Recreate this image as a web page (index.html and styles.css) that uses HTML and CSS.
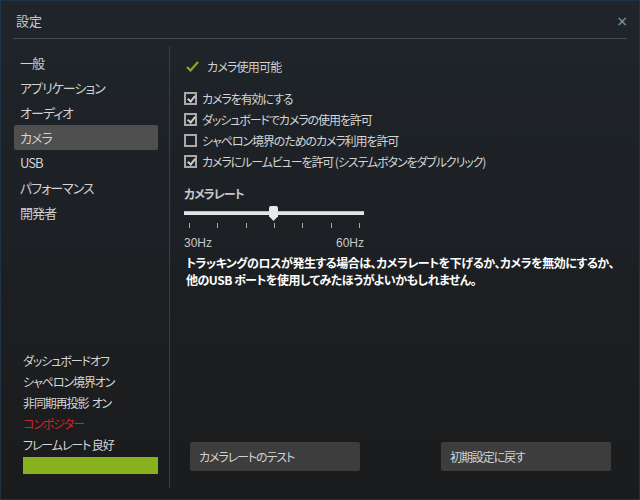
FILE: index.html
```html
<!DOCTYPE html>
<html lang="ja">
<head>
<meta charset="utf-8">
<link rel="stylesheet" href="styles.css">
</head>
<body>
<div class="window">
  <header class="titlebar">
    <span class="title">設定</span>
    <span class="close">×</span>
  </header>
  <div class="rule"></div>
  <div class="main">
    <aside class="sidebar">
      <nav class="nav">
        <div class="nav-item">一般</div>
        <div class="nav-item">アプリケーション</div>
        <div class="nav-item">オーディオ</div>
        <div class="nav-item active">カメラ</div>
        <div class="nav-item">USB</div>
        <div class="nav-item">パフォーマンス</div>
        <div class="nav-item">開発者</div>
      </nav>
      <div class="status">
        <div class="status-item">ダッシュボードオフ</div>
        <div class="status-item">シャペロン境界オン</div>
        <div class="status-item">非同期再投影&nbsp;&nbsp;オン</div>
        <div class="status-item red">コンポジター</div>
        <div class="status-item">フレームレート 良好</div>
        <div class="status-bar"></div>
      </div>
    </aside>
    <section class="content">
      <div class="ready">
        <svg class="tick" width="13" height="11" viewBox="0 0 13 11"><path d="M1 6 L4.5 9.5 L12 1" fill="none" stroke="#7fb01e" stroke-width="2.2"/></svg>
        <span>カメラ使用可能</span>
      </div>
      <div class="checks">
        <label class="check"><span class="box on"></span>カメラを有効にする</label>
        <label class="check"><span class="box on"></span>ダッシュボードでカメラの使用を許可</label>
        <label class="check"><span class="box"></span>シャペロン境界のためのカメラ利用を許可</label>
        <label class="check"><span class="box on"></span>カメラにルームビューを許可 (システムボタンをダブルクリック)</label>
      </div>
      <div class="rate-title">カメラレート</div>
      <div class="slider">
        <div class="track"></div>
        <div class="thumb"></div>
      </div>
      <div class="ticks">
        <span></span><span></span><span></span><span></span><span></span><span></span><span></span>
      </div>
      <div class="hz"><span>30Hz</span><span>60Hz</span></div>
      <p class="warn">トラッキングのロスが発生する場合は、カメラレートを下げるか、カメラを無効にするか、<br>他のUSB ポートを使用してみたほうがよいかもしれません。</p>
      <div class="buttons">
        <button class="btn">カメラレートのテスト</button>
        <button class="btn">初期設定に戻す</button>
      </div>
    </section>
  </div>
</div>
</body>
</html>
```
FILE: styles.css
```css
* { box-sizing: border-box; }
html, body { margin: 0; padding: 0; }
body {
  width: 640px;
  height: 500px;
  overflow: hidden;
  font-family: "Noto Sans CJK JP", "Liberation Sans", sans-serif;
  font-feature-settings: "palt";
  color: #d0d0d0;
  background: #1b1c1d;
}
.window {
  width: 640px;
  height: 500px;
  display: flex;
  flex-direction: column;
  border: 1px solid #1f3346;
  background: linear-gradient(180deg, #1f252b 0%, #1d2024 45%, #1a1b1c 100%);
}
.titlebar {
  height: 37px;
  display: flex;
  align-items: center;
  justify-content: space-between;
  padding: 2px 11px 0 15px;
}
.title { font-size: 13px; color: #c8c8c8; }
.close { font-size: 14px; color: #9a9a9a; font-family: "DejaVu Sans", sans-serif; }
.rule {
  height: 1px;
  margin: 0 12px 0 12px;
  background: #4a4a4a;
}
.main {
  flex: 1;
  display: flex;
  padding: 7px 0 11px 0;
}
.sidebar {
  flex: none;
  width: 169px;
  border-right: 1px solid #3b3d40;
  display: flex;
  flex-direction: column;
  justify-content: space-between;
  padding: 4px 11px 14px 13px;
}
.nav-item {
  height: 25px;
  line-height: 25px;
  padding-left: 6px;
  font-size: 13px;
  letter-spacing: -1px;
  color: #d2d2d2;
  border-radius: 2px;
}
.nav-item.active { background: #4f4f4f; }
.status { padding-left: 9px; }
.status-item {
  height: 21px;
  line-height: 21px;
  font-size: 12px;
  letter-spacing: -1.1px;
  color: #d6d6d6;
}
.status-item.red { color: #c8262c; }
.status-bar {
  margin-top: 2px;
  height: 17px;
  background: #87b11d;
}
.content {
  flex: 1;
  min-width: 0;
  display: flex;
  flex-direction: column;
  padding: 10px 28px 17px 14px;
}
.ready {
  display: flex;
  align-items: center;
  height: 20px;
  font-size: 12px;
  letter-spacing: -0.8px;
  color: #d0d0d0;
}
.tick { margin-left: 2px; margin-right: 8px; }
.checks { margin-top: 12px; }
.check {
  display: flex;
  align-items: center;
  height: 21px;
  font-size: 12px;
  letter-spacing: -1.1px;
  color: #d4d4d4;
}
.box {
  flex: none;
  width: 13px;
  height: 13px;
  border: 2px solid #a9a9a9;
  margin-right: 5px;
  position: relative;
  background: #1e2226;
}
.box.on::after {
  content: "";
  position: absolute;
  left: 3px;
  top: 0px;
  width: 3px;
  height: 6px;
  border: solid #cfcfcf;
  border-width: 0 2px 2px 0;
  transform: rotate(40deg);
}
.rate-title {
  margin-top: 13px;
  font-size: 12px;
  font-weight: bold;
  letter-spacing: -1px;
  color: #c8c8c8;
  height: 18px;
  line-height: 18px;
}
.slider {
  position: relative;
  width: 180px;
  height: 16px;
  margin-top: 3px;
}
.track {
  position: absolute;
  left: 0; right: 0; top: 5px;
  height: 4px;
  background: #e4e4e4;
  border-top: 1px solid #bdbdbd;
}
.thumb {
  position: absolute;
  left: 85px;
  top: 0;
  width: 9px;
  height: 15px;
  background: #e9e9e9;
  border-radius: 2px 2px 0 0;
  clip-path: polygon(0 0, 100% 0, 100% 68%, 50% 100%, 0 68%);
}
.ticks {
  width: 180px;
  padding: 0 4px 0 5px;
  display: flex;
  justify-content: space-between;
  height: 6px;
  margin-top: 1px;
}
.ticks span { width: 1px; height: 5px; background: #a8a8a8; }
.hz {
  width: 180px;
  display: flex;
  justify-content: space-between;
  font-family: "Liberation Sans", sans-serif;
  font-size: 12px;
  color: #c8c8c8;
  margin-top: 7px;
}
.warn {
  margin: 4px 0 0 2px;
  font-size: 12px;
  font-weight: bold;
  line-height: 17px;
  letter-spacing: -0.5px;
  color: #ffffff;
  white-space: nowrap;
}
.buttons {
  margin-top: auto;
  display: flex;
  justify-content: space-between;
  padding-left: 6px;
}
.btn {
  width: 170px;
  height: 29px;
  border: none;
  border-radius: 2px;
  background: #3d3d3d;
  color: #d2d2d2;
  font-family: inherit;
  font-feature-settings: "palt";
  font-size: 12px;
  letter-spacing: -1.1px;
  text-align: left;
  padding: 0 9px;
}
```
